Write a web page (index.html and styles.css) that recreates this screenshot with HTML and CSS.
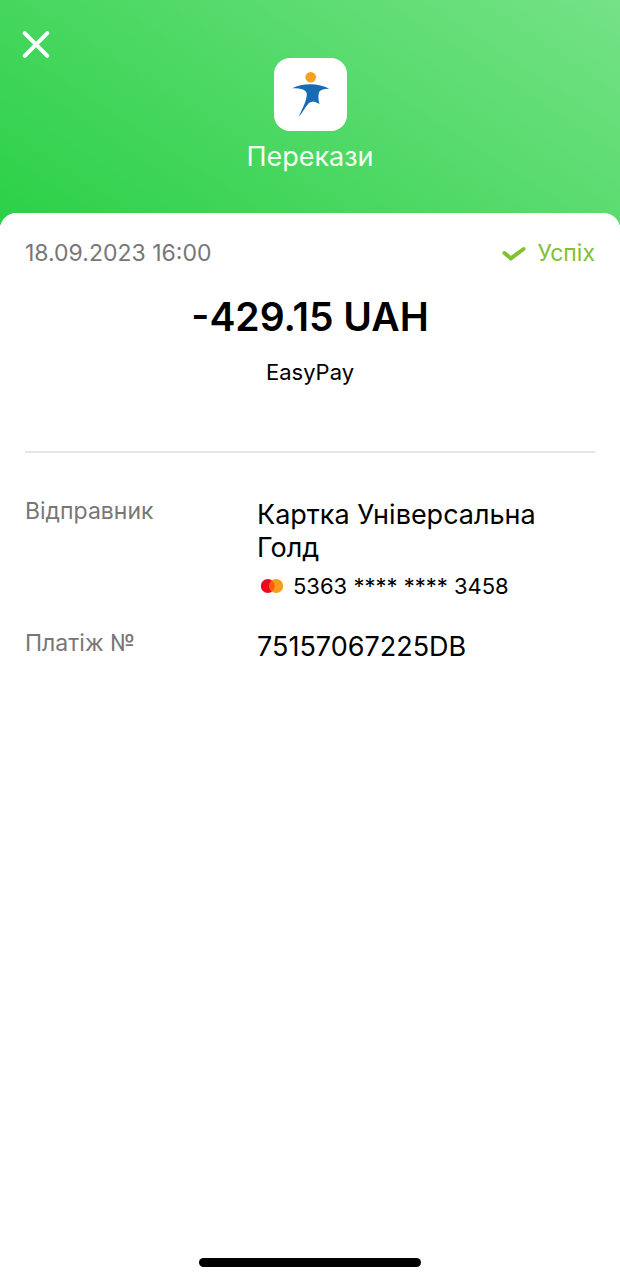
FILE: index.html
```html
<!DOCTYPE html>
<html lang="uk">
<head>
<meta charset="utf-8">
<meta name="viewport" content="width=device-width, initial-scale=1">
<title>Перекази</title>
<link rel="stylesheet" href="styles.css">
</head>
<body>
<header class="header">
  <button class="close" type="button" aria-label="Закрити">
    <svg width="28" height="28" viewBox="0 0 28 28" aria-hidden="true"><path d="M2.7 3.2 25.3 25.8M25.3 3.2 2.7 25.8" fill="none" stroke="#fff" stroke-width="4" stroke-linecap="round"/></svg>
  </button>
  <div class="service">
    <div class="logo">
      <svg width="73" height="73" viewBox="0 0 73 73" aria-hidden="true">
        <circle cx="36.7" cy="19.2" r="5.3" fill="#f6a11f"/>
        <path d="M18.2 30.2C28 24.8 45 24.6 55.2 30.8C50 31 46.5 31.8 45.3 33.8C43.8 37 44.3 42 45.6 46.4C44.5 45.4 43.8 44.6 42.6 44.8C41.5 43.2 36.5 43.2 34.3 45.7C30.5 50 28.5 55 24.6 58.8C28.5 50.5 32.5 43 32.8 36.5C32.8 31.5 27.5 30.4 18.2 30.2Z" fill="#176bb5"/>
      </svg>
    </div>
    <h1 class="title">Перекази</h1>
  </div>
</header>
<main class="sheet">
  <div class="meta">
    <time datetime="2023-09-18T16:00">18.09.2023 16:00</time>
    <span class="status">
      <svg width="24" height="16" viewBox="0 0 24 16" aria-hidden="true"><path d="M2.4 8 8.8 13.4 21.6 4" fill="none" stroke="#82c034" stroke-width="4" stroke-linecap="round"/></svg>
      Успіх
    </span>
  </div>
  <p class="amount">-429.15 UAH</p>
  <p class="payee">EasyPay</p>
  <hr class="rule">
  <dl class="details">
    <dt>Відправник</dt>
    <dd>Картка Універсальна Голд
      <span class="card">
        <svg width="24" height="16" viewBox="0 0 24 16" aria-hidden="true"><circle cx="7.8" cy="8" r="7" fill="#eb0a1e"/><circle cx="16.2" cy="8" r="7" fill="#f79b1c"/><path d="M12 2.4a7 7 0 0 1 0 11.2a7 7 0 0 1 0-11.2Z" fill="#fc5b0c"/></svg>
        5363 **** **** 3458
      </span>
    </dd>
    <dt>Платіж №</dt>
    <dd>75157067225DB</dd>
  </dl>
  <div class="home"></div>
</main>
</body>
</html>
```
FILE: styles.css
```css
* { box-sizing: border-box; }

body {
  margin: 0;
  min-height: 100vh;
  display: flex;
  flex-direction: column;
  background: #fff;
  color: #000;
  font-family: Inter, "Liberation Sans", sans-serif;
  font-size: 23px;
  line-height: 32px;
}

.header {
  display: grid;
  grid-template-columns: 1fr auto 1fr;
  align-items: start;
  padding: 24px 16px 52px;
  margin-bottom: -12px;
  background: linear-gradient(33deg, #2bd047, #75e286);
}

.close {
  display: flex;
  justify-self: start;
  padding: 6px;
  border: 0;
  background: none;
}

.service {
  display: flex;
  flex-direction: column;
  align-items: center;
  gap: 10px;
  padding-top: 34px;
}

.logo {
  display: flex;
  overflow: hidden;
  border-radius: 16px;
  background: #fff;
}

.title {
  margin: 0;
  color: #f3fff0;
  font-size: 27px;
  font-weight: 400;
  line-height: 32px;
}

.sheet {
  flex: 1;
  display: flex;
  flex-direction: column;
  padding: 24px 25px 13px;
  border-radius: 16px 16px 0 0;
  background: #fff;
}

.meta {
  display: flex;
  justify-content: space-between;
  color: #777;
}

.status {
  display: flex;
  align-items: center;
  gap: 12px;
  color: #82c034;
}

.amount {
  margin: 24px 0 0;
  font-size: 39px;
  font-weight: 600;
  line-height: 48px;
  text-align: center;
}

.payee {
  margin: 15px 0 0;
  font-size: 22px;
  text-align: center;
}

.rule {
  width: 100%;
  height: 2px;
  margin: 63px 0 45px;
  border: 0;
  background: #e6e6e6;
}

.details {
  display: grid;
  grid-template-columns: 232px 1fr;
  row-gap: 28px;
  margin: 0;
}

.details dt {
  color: #777;
  line-height: 26px;
}

.details dd {
  margin: 0;
  font-size: 27px;
  line-height: 33px;
}

.card {
  display: flex;
  align-items: center;
  gap: 9px;
  padding: 6px 0 0 3px;
  font-size: 22px;
  line-height: 32px;
}

.home {
  width: 39%;
  height: 9px;
  margin: auto auto 0;
  border-radius: 5px;
  background: #000;
}
```
